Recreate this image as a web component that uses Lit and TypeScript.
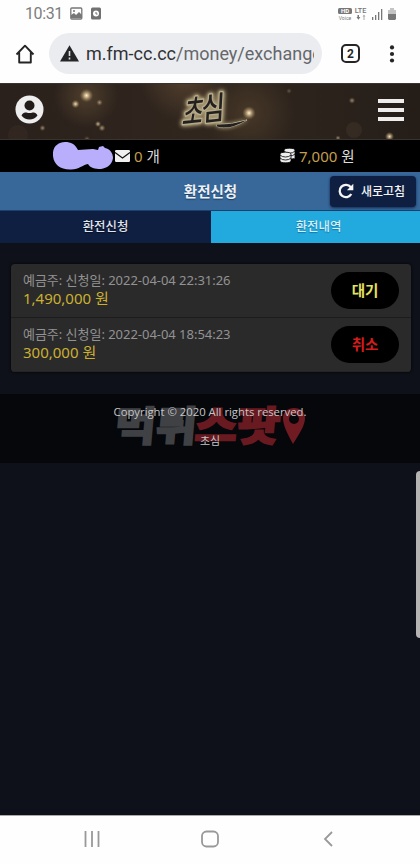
import { LitElement, html, css, svg } from "lit";
import { customElement } from "lit/decorators.js";

interface Exchange {
  date: string;
  amount: string;
  status: string;
  kind: string;
}

const EXCHANGES: Exchange[] = [
  { date: "2022-04-04 22:31:26", amount: "1,490,000", status: "대기", kind: "waiting" },
  { date: "2022-04-04 18:54:23", amount: "300,000", status: "취소", kind: "cancelled" },
];

const SPARKS = [
  [86.5, 11.5, 3.2, 1], [75.5, 20, 2, 0.9], [99.5, 18.5, 1.6, 0.5], [98, 40, 1.5, 0.7],
  [102, 44, 1.7, 0.55], [42.5, 44, 1.5, 0.5], [87, 55, 1.5, 0.3], [249, 29, 3.2, 1],
  [352, 16.5, 1.6, 0.5], [289, 7, 1.4, 0.25], [338, 54, 1.3, 0.5], [389.5, 52.5, 2.2, 0.9],
];

@customElement("phone-chrome")
class PhoneChrome extends LitElement {
  static styles = css`
    :host { display: block; height: 83px; background: #fefefe; font-family: Roboto, sans-serif; }
    .status { display: flex; height: 27px; align-items: center; padding: 0 23px 0 25px; color: #7d7d7d; }
    .time { font-size: 16px; line-height: 27px; letter-spacing: -0.4px; width: 45px; }
    .grow { flex: 1; }
    .bar { display: flex; align-items: center; height: 56px; box-sizing: border-box; padding: 0 20px 3px 15px; }
    .pill { display: flex; align-items: center; box-sizing: border-box; width: 273px; height: 41px; margin-left: 14px; padding: 0 8px 0 11px; border-radius: 21px; background: #ebecf0; }
    .url { flex: 1; margin-left: 7px; overflow: hidden; white-space: nowrap; font-size: 18px; letter-spacing: 0; line-height: 30px; color: #65676b; }
    .host { color: #303236; }
    .count { display: flex; align-items: center; justify-content: center; box-sizing: border-box; width: 19px; height: 19px; margin-left: 19px; border: 2px solid #252525; border-radius: 5px; font-size: 12px; font-weight: 700; color: #252525; }
    svg { display: block; flex: none; }
  `;
  render() {
    return html`
      <div class="status">
        <span class="time">10:31</span>
        <svg width="32" height="14" viewBox="0 0 32 14">
          <rect x="0.8" y="1" width="11" height="11" rx="1" fill="none" stroke="#777" stroke-width="1.3" />
          <path d="M1 11V8l3-2 2 2 3-3 3 3v3z" fill="#777" /><circle cx="4" cy="4" r="1" fill="#777" />
          <rect x="21" y="0.5" width="10" height="12" rx="1.5" fill="#717171" />
          <circle cx="26" cy="6.5" r="3" fill="#fff" /><path d="M26 5v2h1.5" stroke="#717171" fill="none" />
        </svg>
        <span class="grow"></span>
        <svg width="60" height="14" viewBox="0 0 60 14" fill="#777">
          <rect x="1" y="1" width="14" height="6" rx="1.5" />
          <text x="8" y="6.3" font-size="6" font-weight="700" fill="#fff" text-anchor="middle">HD</text>
          <text x="8" y="12.5" font-size="5" text-anchor="middle">Voice</text>
          <text x="23.5" y="6.4" font-size="7.3" font-weight="500" text-anchor="middle">LTE</text>
          <path d="M19.5 10h1V8h1.5v2h1.4l-2 2.8z" /><path d="M26.5 13V9.5h-1l1.5-2 1.5 2h-1V13z" fill="#aaa" />
          <path d="M35 10h1.3v3H35zM38 8h1.3v5H38zM41 5h1.3v8H41zM44 2h1.3v11H44z" />
          <path d="M51 3h2V1h4v2h2v4h-8z" fill="#c4c4c4" /><path d="M51 7h8v5l-1 1h-6l-1-1z" />
        </svg>
      </div>
      <div class="bar">
        <svg width="20" height="20" viewBox="0 0 20 20"><path d="M1.5 10.5 10 1.7l8.5 8.8M4.2 8.5v10h11.6v-10" fill="none" stroke="#242424" stroke-width="1.9" stroke-linejoin="round" /></svg>
        <div class="pill">
          <svg width="19" height="17" viewBox="0 0 19 17"><path d="M9.5.3 19 16.5H0z" fill="#252628" /><path d="M9.5 6v5M9.5 12.5v2" stroke="#dfe0e4" stroke-width="1.6" /></svg>
          <div class="url"><span class="host">m.fm-cc.cc</span>/money/exchange</div>
        </div>
        <div class="count">2</div>
        <span class="grow"></span>
        <svg width="16" height="20" viewBox="0 0 16 20" fill="#252525"><circle cx="8" cy="3.4" r="2.1" /><circle cx="8" cy="10" r="2.1" /><circle cx="8" cy="16.5" r="2.1" /></svg>
      </div>
    `;
  }
}

@customElement("site-header")
class SiteHeader extends LitElement {
  static styles = css`
    :host { display: block; }
    .banner { position: relative; display: flex; align-items: center; justify-content: space-between; box-sizing: border-box; height: 57px; padding: 0 16px 4px 15px; border-top: 1px solid #3a332e; border-bottom: 1px solid #37342e; overflow: hidden;
      background: radial-gradient(circle at 86px 12px, #4e3e2c 0, #44352400 32px), radial-gradient(circle at 185px -8px, #54402e 0, #45352400 46px), radial-gradient(circle at 249px 29px, #463727 0, #44352400 46px), linear-gradient(90deg, #2b211c, #30261e 45%, #2b221c 80%, #241d18); }
    .sparks { position: absolute; left: 0; top: 0; overflow: visible; }
    .logo { text-shadow: 0 0 2px #b8a982, 0 0 4px #9a8b68; }
    .menu { display: flex; flex-direction: column; gap: 5px; position: relative; width: 26px; padding-top: 1px; }
    .menu i { display: block; height: 4px; background: #eeedeb; }
    .user { position: relative; }
    .balance { display: flex; height: 32px; box-sizing: border-box; padding-bottom: 1px; background: #000; color: #ddd; font-size: 15px; align-items: center; }
    .half { display: flex; align-items: center; box-sizing: border-box; height: 100%; line-height: 30px; }
    .mail { width: 280px; padding-left: 53px; }
    .n { color: #c39e4d; margin-left: 4px; }
    .unit { font-size: 14.5px; margin-left: 4px; }
    svg { display: block; flex: none; }
  `;
  render() {
    return html`
      <div class="banner">
        <svg class="sparks" width="420" height="56" viewBox="0 0 420 56">
          <defs>
            <radialGradient id="spark"><stop offset="0" stop-color="#fff4cf" /><stop offset=".3" stop-color="#e3cba0" stop-opacity=".8" /><stop offset="1" stop-color="#a58757" stop-opacity="0" /></radialGradient>
          </defs>
          <circle cx="18" cy="51" r="10" fill="#6b5540" opacity=".1" /><circle cx="354" cy="46" r="8" fill="#6b5540" opacity=".2" />
          ${SPARKS.map(([x, y, r, o]) => svg`<circle cx=${x} cy=${y} r=${r * 2.1} opacity=${o} fill="url(#spark)" />`)}
          <g class="logo" font-family="'Noto Sans CJK KR', sans-serif" font-weight="500" fill="#232120" stroke="#c4bb9f" stroke-width="2.2" paint-order="stroke" stroke-linejoin="round" style="filter:drop-shadow(0 0 2px #b8a982)">
            <text transform="matrix(.76 -.08 -.2 1.16 181.500 41)" font-size="29">초</text>
            <text transform="matrix(.9 -.1 -.06 1.14 201 37)" font-size="28">심</text>
            <path d="M217 42.500Q229 46.500 247 36Q231 41 217 40.500z" stroke-width="1" />
          </g>
        </svg>
        <svg class="user" width="29" height="29" viewBox="0 0 29 29"><circle cx="14.5" cy="14.5" r="14" fill="#eee" /><circle cx="14.5" cy="10.5" r="5" fill="#211c19" /><path d="M6.5 20.5C7.5 18 9.5 17.5 11.5 17.5q3 1.2 6 0c2 0 4 .5 5 3C20.5 23 18 24.5 14.5 24.5S8.5 23 6.5 20.5z" fill="#211c19" /></svg>
        <div class="menu"><i></i><i></i><i></i></div>
      </div>
      <div class="balance">
        <div class="half mail">
          <svg width="62" height="30" viewBox="0 0 62 30"><path d="M0 15C-1 6 5 1 12 1c6 0 10 2 13 8l15-1 5 1 1-3 4-1 2 2c5 1 8 5 8 10-1 7-6 10-12 11-6 0-11-1-13-5C29 24 26 29 17 28.5 7 28 1 24 0 15z" fill="#b9aefb" /></svg>
          <svg width="15" height="12" viewBox="0 0 15 12"><rect width="15" height="12" rx="1.2" fill="#f0f0f0" /><path d="M0 2.5 7.5 8 15 2.5" fill="none" stroke="#111" stroke-width="1.2" /></svg>
          <span class="n">0</span><span class="unit">개</span>
        </div>
        <div class="half">
          <svg width="15" height="15" viewBox="0 0 15 15" fill="#eee" stroke="#000" stroke-width=".8"><path d="M4 8.5V2.5Q4 .2 9.5.2T15 2.5V9.5Q15 11 11 11z" /><path d="M4 3Q6 5.2 9.5 5.2T15 3M4 6Q6 8 9.5 8T15 6" fill="none" /><path d="M0 6.5Q0 4.2 5.5 4.2T11 6.5V12.5Q11 14.8 5.5 14.8T0 12.5z" /><path d="M0 7Q2 9 5.5 9T11 7M0 10Q2 12 5.5 12T11 10" fill="none" /></svg>
          <span class="n">7,000</span><span class="unit">원</span>
        </div>
      </div>
    `;
  }
}

@customElement("exchange-item")
class ExchangeItem extends LitElement {
  static properties = { item: { attribute: false } };
  declare item: Exchange;
  static styles = css`
    :host { display: flex; align-items: center; justify-content: space-between; box-sizing: border-box; height: 54px; padding: 0 12px 0 12px; border-bottom: 1px solid #1c1c1d; background: #2a2a2b; }
    :host(:last-child) { border-bottom-color: #252526; }
    .text { padding-bottom: 3px; }
    .meta { font-size: 13px; line-height: 17px; letter-spacing: -0.03px; color: #929292; white-space: nowrap; }
    .amount { font-size: 15px; line-height: 18px; color: #cbb030; }
    .badge { width: 68px; height: 37px; border-radius: 19px; background: #000; text-align: center; font-size: 14.5px; font-weight: 700; line-height: 36px; }
    .waiting { color: #e4e360; }
    .cancelled { color: #d51c1c; }
  `;
  render() {
    return html`
      <div class="text">
        <div class="meta">예금주: 신청일: ${this.item.date}</div>
        <div class="amount">${this.item.amount} 원</div>
      </div>
      <div class="badge ${this.item.kind}">${this.item.status}</div>
    `;
  }
}

@customElement("app-root")
class AppRoot extends LitElement {
  static styles = css`
    :host { position: relative; display: flex; flex-direction: column; width: 420px; height: 864px; overflow: hidden; background: #0e1119; font-family: "Noto Sans", "Noto Sans CJK KR", sans-serif; }
    .title { display: grid; grid-template-columns: 1fr auto 1fr; align-items: center; height: 38px; flex: none; padding-right: 4px; background: #38679a; color: #edf2f7; border-bottom: 1px solid #1b416c; }
    .title h1 { grid-column: 2; margin: 0 0 0 5px; font-size: 14.5px; line-height: 38px; font-weight: 600; text-shadow: 0 1px 1px #1d3e62; }
    .refresh { justify-self: end; display: flex; align-items: center; box-sizing: border-box; width: 86px; height: 31px; padding-left: 8px; gap: 7px; border-radius: 4px; background: #0f1f41; box-shadow: 0 1px 3px #122a50; color: #f3f3f5; font-size: 12px; font-weight: 500; line-height: 30px; white-space: nowrap; font-family: "Noto Sans CJK KR", sans-serif; }
    .tabs { display: grid; grid-template-columns: 211px 1fr; height: 32px; flex: none; font-family: "Noto Sans CJK KR", sans-serif; }
    .tab { text-align: center; color: #e1e5ee; font-size: 12.4px; line-height: 30px; font-weight: 500; background: #0f1f41; text-shadow: 0 1px 1px #0008; }
    .active { background: #22a9de; color: #d8eff9; text-shadow: 0 1px 1px #1676a4; padding-left: 6px; }
    .list { flex: none; margin: 21px 9px 0 11px; border-radius: 4px; overflow: hidden; box-shadow: 0 0 3px #000; }
    footer { position: relative; flex: none; height: 69px; margin-top: 22px; box-sizing: border-box; padding-top: 9px; background: #05070b; color: #c5c5c7; text-align: center; font-size: 11.3px; font-family: "Open Sans", "Noto Sans CJK KR", sans-serif; }
    footer p { position: relative; margin: 0; line-height: 18px; }
    footer p + p { margin-top: 11px; font-size: 11px; }
    .mark { position: absolute; left: 110px; top: 0; overflow: visible; }
    .thumb { position: absolute; left: 416px; top: 471px; width: 8px; height: 167px; border-radius: 4px; background: #b6b3b3; }
    .nav { display: grid; grid-template-columns: repeat(3, 118px); justify-content: center; justify-items: center; align-items: center; height: 49px; margin-top: auto; flex: none; box-sizing: border-box; border-top: 1px solid #aaa; padding-bottom: 2px; background: #fefefe; }
    svg { display: block; }
  `;
  render() {
    return html`
      <phone-chrome></phone-chrome>
      <site-header></site-header>
      <div class="title">
        <h1>환전신청</h1>
        <div class="refresh">
          <svg width="16" height="16" viewBox="0 0 16 16"><path d="M13.300 11A6.200 6.200 0 1 1 12.800 4.200" fill="none" stroke="#f5f5f5" stroke-width="2.3" /><path d="M15.3.8v6.4H8.900z" fill="#f5f5f5" /></svg>
          새로고침
        </div>
      </div>
      <div class="tabs"><div class="tab">환전신청</div><div class="tab active">환전내역</div></div>
      <div class="list">${EXCHANGES.map((e) => html`<exchange-item .item=${e}></exchange-item>`)}</div>
      <footer>
        <svg class="mark" width="200" height="69" viewBox="0 0 200 69">
          <g font-family="'Noto Sans CJK KR', sans-serif" font-weight="900" font-size="41" stroke-width="1.6">
            <text transform="skewX(-5)" x="8" y="47" textLength="82" lengthAdjust="spacingAndGlyphs" fill="#404145" stroke="#404145">먹튀</text>
            <text transform="skewX(-5)" x="88" y="47" textLength="85" lengthAdjust="spacingAndGlyphs" fill="#681a20" stroke="#681a20">스팟</text>
          </g>
          <path fill-rule="evenodd" d="M184 14c7 0 11 4 11 10 0 7-5 15-12 26-6-11-10-19-10-26 0-6 5-10 11-10zm0 6a5 5 0 1 0 0 10 5 5 0 0 0 0-10z" fill="#701b21" />
        </svg>
        <p>Copyright © 2020 All rights reserved.</p>
        <p>초심</p>
      </footer>
      <div class="thumb"></div>
      <div class="nav">
        <svg width="16" height="16" viewBox="0 0 16 16"><path d="M1.5 0v16M8 0v16M14.5 0v16" stroke="#999" stroke-width="1.8" /></svg>
        <svg width="18" height="18" viewBox="0 0 18 18"><rect x="1" y="1.5" width="16" height="15" rx="4.5" fill="none" stroke="#999" stroke-width="1.8" /></svg>
        <svg width="10" height="16" viewBox="0 0 10 16"><path d="M9 1 2 8l7 7" fill="none" stroke="#999" stroke-width="1.8" /></svg>
      </div>
    `;
  }
}
